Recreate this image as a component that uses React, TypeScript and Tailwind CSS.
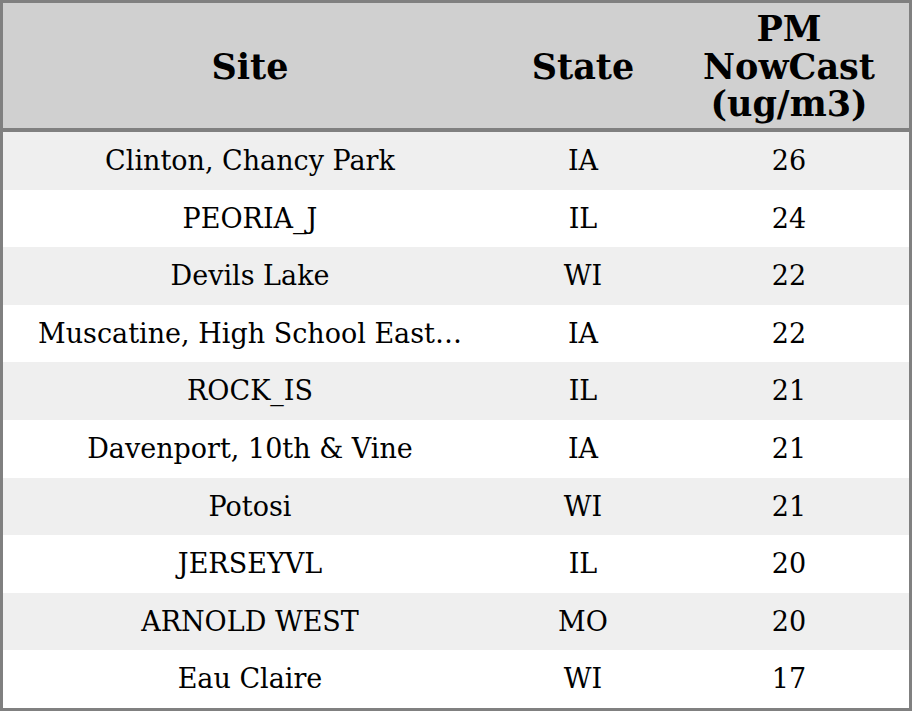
const rows: [string, string, number][] = [
  ['Clinton, Chancy Park', 'IA', 26],
  ['PEORIA_J', 'IL', 24],
  ['Devils Lake', 'WI', 22],
  ['Muscatine, High School East…', 'IA', 22],
  ['ROCK_IS', 'IL', 21],
  ['Davenport, 10th & Vine', 'IA', 21],
  ['Potosi', 'WI', 21],
  ['JERSEYVL', 'IL', 20],
  ['ARNOLD WEST', 'MO', 20],
  ['Eau Claire', 'WI', 17],
];

export default function App() {
  return (
    <div className="w-[912px] h-[711px] border-[3px] border-[#808080] bg-white font-['DejaVu_Serif',serif] text-black flex flex-col">
      <div className="h-[129px] shrink-0 bg-[#d0d0d0] border-b-[4px] border-[#808080] flex items-center text-[35px] font-bold leading-[37.5px] text-center pt-[2px]">
        <div className="w-[494px]">Site</div>
        <div className="w-[172px]">State</div>
        <div className="w-[240px]">
          PM
          <br />
          NowCast
          <br />
          (ug/m3)
        </div>
      </div>
      <div className="flex-1 flex flex-col">
        {rows.map(([site, state, val], i) => (
          <div
            key={i}
            className={`flex-1 flex items-center text-center text-[27px] pt-[1px] ${i % 2 === 0 ? 'bg-[#efefef]' : 'bg-white'}`}
          >
            <div className="w-[494px]">{site}</div>
            <div className="w-[172px]">{state}</div>
            <div className="w-[240px]">{val}</div>
          </div>
        ))}
      </div>
    </div>
  );
}
